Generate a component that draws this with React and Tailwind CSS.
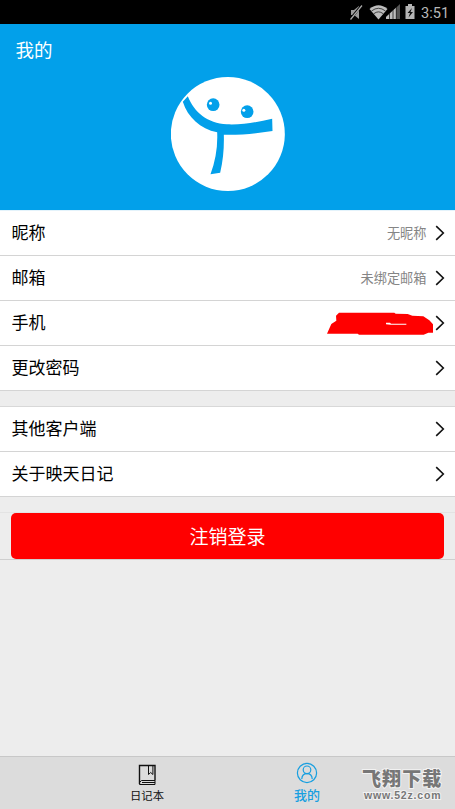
import React from "react";

function Chevron() {
  return (
    <svg className="ml-[8px] h-[16px] w-[10px] shrink-0" viewBox="0 0 10 16" fill="none" stroke="#111" strokeWidth="1.6">
      <path d="M1.2 1.2 L8.3 8 L1.2 14.8" />
    </svg>
  );
}

function Row({ label, value, children }) {
  return (
    <div className="flex h-[45px] items-center border-b border-[#d4d4d4] bg-white pr-[10px] pl-[11.5px]">
      <span className="flex-1 pb-[2px] text-[17px] leading-[42px] text-black">{label}</span>
      {value && <span className="mr-[0.5px] text-[13.2px] text-[#858585]">{value}</span>}
      {children}
      <Chevron />
    </div>
  );
}

function Avatar() {
  return (
    <svg className="h-[114px] w-[114px]" viewBox="32.5 21 342 342">
      <circle cx="203" cy="192" r="171" fill="#fff" />
      <g fill="#02a0ea">
        <path d="M83 79 C102 128 142 160 200 163 C250 165 292 156 336 146 L337 183 C290 190 246 195 191 194 C192 235 189 270 180 308 L151 313 C166 272 173 230 171 187 C120 176 83 142 68 95 Z" />
        <circle cx="159" cy="104" r="19" />
        <circle cx="261" cy="125" r="19" />
      </g>
      <circle cx="151" cy="100" r="4.5" fill="#fff" />
      <circle cx="251" cy="121" r="4.5" fill="#fff" />
    </svg>
  );
}

function StatusBar() {
  return (
    <div className="flex h-[24px] items-center bg-black pl-[348px]">
      <svg className="h-[24px] w-[70px] shrink-0" viewBox="348 0 70 24">
        <path d="M351 10 h3 l5 -4 v13 l-5 -4 h-3 z" fill="#9a9a9a" />
        <path d="M350 19.5 L361.5 5.5" stroke="#000" strokeWidth="2.4" />
        <path d="M350.5 19.5 L362 5.5" stroke="#aaa" strokeWidth="1.2" />
        <path d="M369.5 9 Q378.5 1.5 387.5 9 L378.5 19.5 Z" fill="#bdbdbd" />
        <path d="M371.5 11 Q378.5 5.5 385.5 11 M373.8 13.7 Q378.5 10 383.2 13.7" fill="none" stroke="#222" strokeWidth=".8" />
        <path d="M386 19 V17 L400 4 V19 Z" fill="#555" />
        <path d="M386 19 V17 L396 7.7 V19 Z" fill="#bdbdbd" />
        <path d="M389.5 13 V19 M393 10 V19 M396.3 7 V19" stroke="#222" strokeWidth=".8" />
        <path d="M405.5 6 h2.5 v-2 h4 v2 h2.5 v13 h-9 z" fill="#b5b5b5" />
        <path d="M412 8 L407.5 13 H410 L408.5 17.5 L413 12 H410.5 Z" fill="#111" />
      </svg>
      <span className="ml-[3px] pt-[2px] font-[Roboto,sans-serif] text-[14.6px] leading-[22px] text-[#b8b8b8]">3:51</span>
    </div>
  );
}

function Scribble() {
  return (
    <svg className="mt-[2px] -mr-[8px] h-[24px] w-[108px] shrink-0" viewBox="36 322 324 72">
      <path d="M36 387 L49 358 L64 348 L63 333 L72 324 H238 L242 327 L278 328 L292 333 L325 335 L343 347 L354 359 V384 H340 L326 390 H132 L128 387 Z" fill="#f00" />
      <path d="M213 354 H225 L228 357 H274 V360 H226 L213 359 Z" fill="#fff" />
    </svg>
  );
}

export default function App() {
  return (
    <div className="flex h-[809px] w-[455px] flex-col overflow-hidden bg-[#ededed] font-['Noto_Sans_CJK_SC',sans-serif]">
      <StatusBar />
      <header className="flex h-[186px] flex-col bg-[#02a0ea]">
        <h1 className="h-[53px] pl-[15.5px] text-[18.5px] leading-[50px] text-white">我的</h1>
        <div className="flex justify-center">
          <Avatar />
        </div>
      </header>
      <div className="border-t border-[#e4f3fb]">
        <Row label="昵称" value="无昵称" />
        <Row label="邮箱" value="未绑定邮箱" />
        <Row label="手机">
          <Scribble />
        </Row>
        <Row label="更改密码" />
      </div>
      <div className="mt-[15px] border-t border-[#d8d8d8]">
        <Row label="其他客户端" />
        <Row label="关于映天日记" />
      </div>
      <div className="mt-[15px] border-t border-b border-t-[#e3e3e3] border-b-[#cfcfcf] px-[11px]">
        <button className="block h-[46px] w-full rounded-[5px] bg-[#f00] text-[19px] leading-[46px] text-white">
          注销登录
        </button>
      </div>
      <nav className="mt-auto flex h-[53px] border-t border-[#c8c8c8] bg-[#dcdcdc]">
        <div className="ml-[67px] flex w-[160px] flex-col items-center">
          <svg className="mt-[7px] h-[22px] w-[18px]" viewBox="0 0 18 22" fill="none" stroke="#111" strokeWidth="1">
            <path d="M1.5 20 V1.5 H17 V16.5" strokeWidth="1.4" />
            <path d="M17 16.5 H3.5 L1.5 18.5 V20.5 H17 V16.5 M4 18.5 H17" />
            <path d="M10.5 1.5 V10.5 L12.7 8.5 L14.9 10.5 V1.5" />
          </svg>
          <span className="mt-[1px] text-[11.3px] leading-[17px] text-[#111]">日记本</span>
        </div>
        <div className="flex w-[160px] flex-col items-center text-[#179fe0]">
          <svg className="mt-[5px] h-[22px] w-[22px]" viewBox="0 0 22 22" fill="none" stroke="currentColor" strokeWidth="1.2">
            <circle cx="11" cy="11" r="9.6" />
            <circle cx="11" cy="7.8" r="3.8" />
            <path d="M5.8 17 Q6 11.6 11 11.6 Q16 11.6 16.2 17" />
          </svg>
          <span className="mt-[1px] text-[13px] leading-[19px] font-medium">我的</span>
        </div>
        <div className="-ml-[25px] flex flex-col text-[#777] [paint-order:stroke_fill] [-webkit-text-stroke:2px_#f2f2f2]">
          <span className="mt-[8px] text-[19px] leading-[25px] font-black tracking-[1.1px] whitespace-nowrap">飞翔下载</span>
          <span className="ml-[2px] font-['Liberation_Sans',sans-serif] text-[10.5px] leading-[11px] font-bold tracking-[0.8px]">www.52z.com</span>
        </div>
      </nav>
    </div>
  );
}
